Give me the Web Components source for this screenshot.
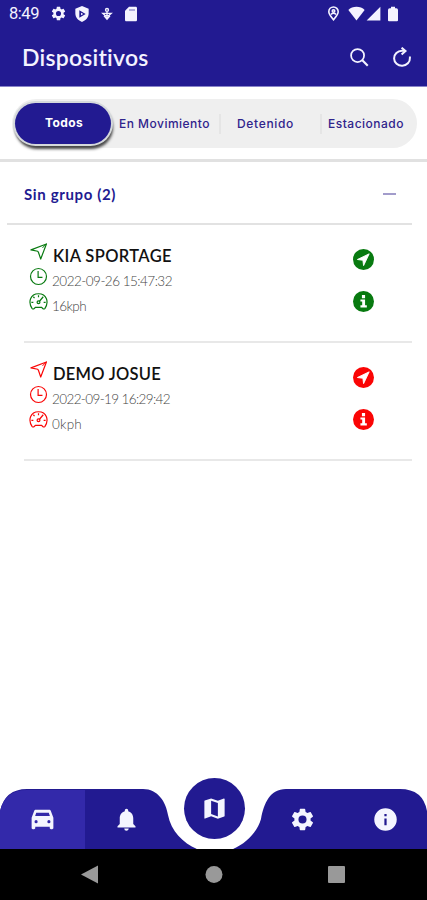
<!DOCTYPE html>
<html lang="es">
<head>
<meta charset="utf-8">
<title>Dispositivos</title>
<style>
html,body{margin:0;height:100%;background:#fff}
body{font-family:Lato,"Open Sans",sans-serif;overflow:hidden}
</style>
</head>
<body>
<app-screen></app-screen>
<script>
const ICONS = {
  gear:'<path fill="currentColor" d="M19.14 12.94c.04-.3.06-.61.06-.94 0-.32-.02-.64-.07-.94l2.03-1.58a.49.49 0 0 0 .12-.61l-1.92-3.32a.488.488 0 0 0-.59-.22l-2.39.96c-.5-.38-1.03-.7-1.62-.94l-.36-2.54a.484.484 0 0 0-.48-.41h-3.84c-.24 0-.43.17-.47.41l-.36 2.54c-.59.24-1.13.57-1.62.94l-2.39-.96a.48.48 0 0 0-.59.22L2.74 8.87c-.12.21-.08.47.12.61l2.03 1.58c-.05.3-.09.63-.09.94s.02.64.07.94l-2.03 1.58a.49.49 0 0 0-.12.61l1.92 3.32c.12.22.37.29.59.22l2.39-.96c.5.38 1.03.7 1.62.94l.36 2.54c.05.24.24.41.48.41h3.84c.24 0 .44-.17.47-.41l.36-2.54c.59-.24 1.13-.56 1.62-.94l2.39.96c.22.08.47 0 .59-.22l1.92-3.32a.48.48 0 0 0-.12-.61l-2.01-1.58zM12 15.6A3.6 3.6 0 1 1 12 8.400a3.600 3.600 0 0 1 0 7.200z"/>',
  shield:'<path fill="currentColor" fill-rule="evenodd" d="M12 0 2 4V11c0 6.500 4.500 11 10 13 5.500-2 10-6.500 10-13V4zM8 6.500 17.500 12 8 17.500z"/><path fill="currentColor" d="m10.500 10 3.500 2-3.500 2z"/>',
  usb:'<g fill="none" stroke="currentColor" stroke-width="2.400"><circle cx="12" cy="5" r="2.500"/><path d="M12 8v11M5 11h14l-4.500 4h-5zM7 15l5 6 5-6"/></g>',
  sd:'<path fill="currentColor" d="M19 1H9L3 7v14c0 1.100.9 2 2 2h14c1.100 0 2-.9 2-2V3c0-1.100-.9-2-2-2z"/><path stroke="#8f8acb" stroke-width="2" d="M9 6h9"/>',
  pin:'<g fill="none" stroke="currentColor" stroke-width="2.600"><path d="M12 22C8 17 4.500 13 4.500 9a7.500 7.500 0 0 1 15 0c0 4-3.500 8-7.500 13z"/><circle cx="12" cy="8" r="2"/><path d="M8 13.500c2-2.500 6-2.500 8 0"/></g>',
  wifi:'<path fill="currentColor" d="M12 22 .5 7C6 1 18 1 23.500 7z"/>',
  signal:'<path fill="currentColor" d="M1 23h22V1z"/>',
  battery:'<path fill="currentColor" d="M17 3.500h-2V1H9v2.500H7Q4.500 3.500 4.500 6v15.500Q4.500 23 6 23h12q1.500 0 1.500-1.500V6q0-2.500-2.500-2.500z"/>',
  search:'<g fill="none" stroke="currentColor" stroke-width="2.100"><circle cx="10.300" cy="10.200" r="7.800"/><path stroke-width="2.600" d="m16 16 6.500 6.500"/></g>',
  reload:'<path fill="none" stroke="currentColor" stroke-width="2.400" d="M21.500 11.500v1.500a9.500 9 0 1 1-9.500-8.500h3"/><path fill="none" stroke="currentColor" stroke-width="2.400" d="m11.500.8 4.700 3.900-4.700 4.300"/>',
  arrow:'<path fill="none" stroke="currentColor" stroke-width="1.500" stroke-linejoin="round" d="M22 2.500 2.500 10l8.500 1.700 1 1.500 2.800 8.300z"/><path stroke="currentColor" stroke-width="1.200" d="M17 7.500 22 2"/>',
  clock:'<g fill="none" stroke="currentColor" stroke-width="1.500"><circle cx="12" cy="12" r="10.100"/><path d="M11.500 5v8h5.500"/></g>',
  gauge:'<g fill="none" stroke="currentColor" stroke-width="1.500"><path stroke-linejoin="round" d="M4 21C-1.500 13 1.500 2.200 12 2.200S25.500 13 20 21q-2 1.500-4-1.500h-8q-2 3-4 1.500z"/><circle cx="12" cy="13" r="1.800"/><path d="m13 12 5-6M12 4v2.500M5.500 6l1.500 1.700M3 13h2.500M18.500 13H21"/></g>',
  go:'<circle cx="12" cy="12" r="12" fill="currentColor"/><path fill="#fff" stroke="#fff" stroke-linejoin="round" d="M18.500 5.500 5 12l6.300.9.800 6.100z"/>',
  badge:'<circle cx="12" cy="12" r="12" fill="currentColor"/><path fill="#fff" d="M10.200 4.500h3.600v3.700h-3.600zM8.500 9.700h5.300v6.700h2v2.400h-7.300v-2.400h2v-4.300h-2z"/>',
  car:'<path fill="currentColor" d="M18.920 5.010C18.720 4.420 18.160 4 17.500 4h-11c-.66 0-1.210.42-1.420 1.010L3 10.500v8.500c0 .55.45 1 1 1h1c.55 0 1-.45 1-1v-1h12v1c0 .55.45 1 1 1h1c.55 0 1-.45 1-1v-8.500zM6.700 15.100a1.300 1.300 0 1 1 0-2.600 1.300 1.300 0 0 1 0 2.600zm10.600 0a1.300 1.300 0 1 1 0-2.600 1.300 1.300 0 0 1 0 2.600zM5.900 9.200l.9-2.700h10.400l.9 2.700z"/>',
  bell:'<path fill="currentColor" d="M12 22c1.100 0 2-.9 2-2h-4a2 2 0 0 0 2 2zm6-6v-5c0-3.070-1.640-5.640-4.500-6.320V4c0-.83-.67-1.500-1.500-1.500s-1.500.67-1.500 1.500v.68C7.630 5.360 6 7.920 6 11v5l-2 2v1h16v-1z"/>',
  map:'<path fill="currentColor" d="m20.500 3-.16.030L15 5.100 9 3 3.360 4.900a.5.5 0 0 0-.36.480V20.500c0 .28.22.5.5.5l.16-.03L9 18.900l6 2.100 5.640-1.900a.5.5 0 0 0 .36-.48V3.500c0-.28-.22-.5-.5-.5zM15 19l-6-2.110V5l6 2.110z"/>',
  info:'<path fill="currentColor" d="M12 2a10 10 0 1 0 0 20 10 10 0 0 0 0-20zm1 15h-2v-6h2zm0-8h-2V7h2z"/>'
};

class Base extends HTMLElement {
  connectedCallback(){
    if(this.shadowRoot) return;
    this.attachShadow({mode:'open'}).innerHTML = this.render();
    this.ready?.();
  }
  a(n){ return this.getAttribute(n); }
}
const define = (n,c) => customElements.define(n,c);

define('app-icon', class extends Base {
  render(){ const s=this.a('size')||24;
    return `<style>:host{display:block;flex:none;width:${s}px;height:${s}px}svg{display:block}</style><svg width="${s}" height="${s}" viewBox="0 0 24 24">${ICONS[this.a('name')]}</svg>`; }
});

/* A single line whose tracking is set so that it spans the given width. */
define('fit-text', class extends Base {
  render(){ return `<style>:host{display:block;flex:none;white-space:nowrap;width:${this.a('w')}px}span{display:inline-block}</style><span>${this.textContent}</span>`; }
  ready(){
    const s=this.shadowRoot.querySelector('span'), w=+this.a('w'), n=this.textContent.length;
    s.style.letterSpacing=((w-s.getBoundingClientRect().width)/n)+'px';
  }
});

define('status-bar', class extends Base {
  render(){ return `<style>
    :host{display:flex;height:28px;align-items:center;color:#f4f3ff;font:16.500px/28px Roboto,sans-serif}
    .l,.r{display:flex;align-items:center}
    .l{padding-left:9px}.r{margin-left:auto;padding-right:26px}
    .l app-icon,.r app-icon{margin-top:-1px}
    </style><div class="l"><fit-text w="30">8:49</fit-text>
    <app-icon name="gear" size="17" style="margin-left:11px"></app-icon>
    <app-icon name="shield" size="16" style="margin-left:7px"></app-icon>
    <app-icon name="usb" size="14" style="margin-left:10px"></app-icon>
    <app-icon name="sd" size="16" style="margin-left:9px"></app-icon></div>
    <div class="r"><app-icon name="pin" size="15"></app-icon>
    <app-icon name="wifi" size="17" style="margin-left:7px"></app-icon>
    <app-icon name="signal" size="15" style="margin-left:1px"></app-icon>
    <app-icon name="battery" size="16" style="margin-left:4px"></app-icon></div>`; }
});

define('title-bar', class extends Base {
  render(){ return `<style>
    :host{display:flex;height:58px;box-sizing:border-box;align-items:center;padding:0 15px 0 22px;color:#f4f3ff}
    h1{margin:0 auto 0 0;font:600 23px/58px Lato,sans-serif}
    app-icon+app-icon{margin-left:23px}
    </style><h1><fit-text w="127">${this.textContent}</fit-text></h1>
    <app-icon name="search" size="20"></app-icon><app-icon name="reload" size="20"></app-icon>`; }
});

define('filter-tabs', class extends Base {
  render(){ return `<style>
    :host{display:block;height:75px;box-sizing:border-box;padding:12px 10px 0 12px;border-bottom:3px solid #e1e1e1;background:#fff}
    nav{display:grid;grid-template-columns:105px 102px 101px 97px;height:49px;align-items:center;border-radius:25px;background:#efefef;color:#30248c;font:500 12px/16px Inter,sans-serif}
    div{display:flex;justify-content:center;align-items:center;height:20px}
    .on{width:96px;height:41px;margin:-1px 0 0 3px;border-radius:21px;background:#221a91;color:#fff;font-weight:700;box-shadow:0 0 0 2px #d5d9dc,1px 4px 3px 1px #444}
    .sep{border-left:2px solid #e5e5e5;box-sizing:border-box}
    </style><nav><div class="on"><fit-text w="38" style="margin-left:2px">Todos</fit-text></div><div style="padding-right:7px"><fit-text w="91">En Movimiento</fit-text></div><div class="sep" style="padding-right:10px"><fit-text w="57">Detenido</fit-text></div><div class="sep" style="padding-right:7px"><fit-text w="76">Estacionado</fit-text></div></nav>`; }
});

define('device-row', class extends Base {
  render(){ return `<style>
    :host{display:flex;height:118px;box-sizing:border-box;margin:0 15px 0 24px;border-bottom:2px solid #e8e8e8;color:${this.a('color')};justify-content:space-between}
    .info{padding:14px 0 0 5px}
    .line{display:flex;align-items:center;height:25px}
    fit-text{margin-left:4px;color:#444;font:300 13.500px/20px Lato,sans-serif}
    h2{margin:0}h2 fit-text{margin-left:5px;font:600 16.500px/24px Lato,sans-serif;color:#111}
    .act{display:flex;flex-direction:column;gap:21px;padding:24px 38px 0 0}
    </style><div class="info">
    <div class="line"><app-icon name="arrow" size="19" style="margin-top:-1px"></app-icon><h2><fit-text w="${this.a('nw')}" style="margin-top:8px">${this.a('name')}</fit-text></h2></div>
    <div class="line"><app-icon name="clock" size="19"></app-icon><fit-text w="${this.a('dw')}" style="margin-top:9px">${this.a('date')}</fit-text></div>
    <div class="line"><app-icon name="gauge" size="19" style="margin-top:-1px"></app-icon><fit-text w="${this.a('sw')}" style="margin-top:8px">${this.a('speed')}</fit-text></div>
    </div><div class="act"><app-icon name="go" size="21"></app-icon><app-icon name="badge" size="21"></app-icon></div>`; }
});

define('device-group', class extends Base {
  render(){ return `<style>
    :host{display:block}
    header{display:flex;align-items:center;justify-content:space-between;height:63px;box-sizing:border-box;margin:0 15px 0 7px;padding:2px 16px 0 17px;border-bottom:2px solid #e2e2e2;color:#221a91;font:700 15px/20px Lato,sans-serif}
    i{width:13px;height:2px;background:#a29ccb}
    </style><header><fit-text w="92">${this.a('label')}</fit-text><i></i></header><slot></slot>`; }
});

define('bottom-tabs', class extends Base {
  render(){ return `<style>
    :host{display:grid;height:72px;color:#f4f5ff}
    .bg,.items{grid-area:1/1}.bg{display:block}
    .items{display:grid;grid-template-columns:85px 82px 94px 82px 84px;padding-top:12px;align-items:center;justify-items:center}
    .mid{display:grid;place-items:center;width:61px;height:61px;border-radius:50%;background:#221a91;margin-top:-21px}
    </style><svg class="bg" width="427" height="72" viewBox="0 0 427 72">
    <path fill="#221a91" d="M0 72V34Q5 12 27 12H143C158 12 166 25 168 38C171 54 183 66 197 72H233C247 66 257 55 261 42C264 26 270 12 286 12H400Q423 12 427 34V72z"/>
    <path fill="#3329aa" d="M0 72V34Q5 13 27 13H85V72z"/>
    <path fill="#fff" d="M196 72 201 69H228L234 72z"/></svg>
    <div class="items"><app-icon name="car" size="29"></app-icon><app-icon name="bell" size="27"></app-icon><div class="mid"><app-icon name="map" size="27"></app-icon></div><app-icon name="gear" size="27"></app-icon><app-icon name="info" size="27"></app-icon></div>`; }
});

define('system-nav', class extends Base {
  render(){ return `<style>:host{display:block;height:51px;background:#000}svg{display:block}</style>
  <svg width="427" height="51" viewBox="0 0 427 51" fill="#999"><path d="M81 25.500 98 16.500v18z"/><circle cx="214" cy="25.500" r="8.500"/><rect x="328" y="17" width="17" height="17" rx="1"/></svg>`; }
});

define('app-screen', class extends Base {
  render(){ return `<style>
    :host{display:flex;flex-direction:column;width:427px;height:900px;background:#fff}
    .top{background:#221a91;height:86px;border-bottom:1px solid #8984c9;box-sizing:content-box}
    main{flex:1}
    </style><div class="top"><status-bar></status-bar><title-bar>Dispositivos</title-bar></div>
    <filter-tabs></filter-tabs>
    <main><device-group label="Sin grupo (2)">
    <device-row color="#087a10" name="KIA SPORTAGE" nw="119" date="2022-09-26 15:47:32" dw="120" speed="16kph" sw="34"></device-row>
    <device-row color="#fa0505" name="DEMO JOSUE" nw="108" date="2022-09-19 16:29:42" dw="118" speed="0kph" sw="30"></device-row>
    </device-group></main><bottom-tabs></bottom-tabs><system-nav></system-nav>`; }
});
</script>
</body>
</html>
